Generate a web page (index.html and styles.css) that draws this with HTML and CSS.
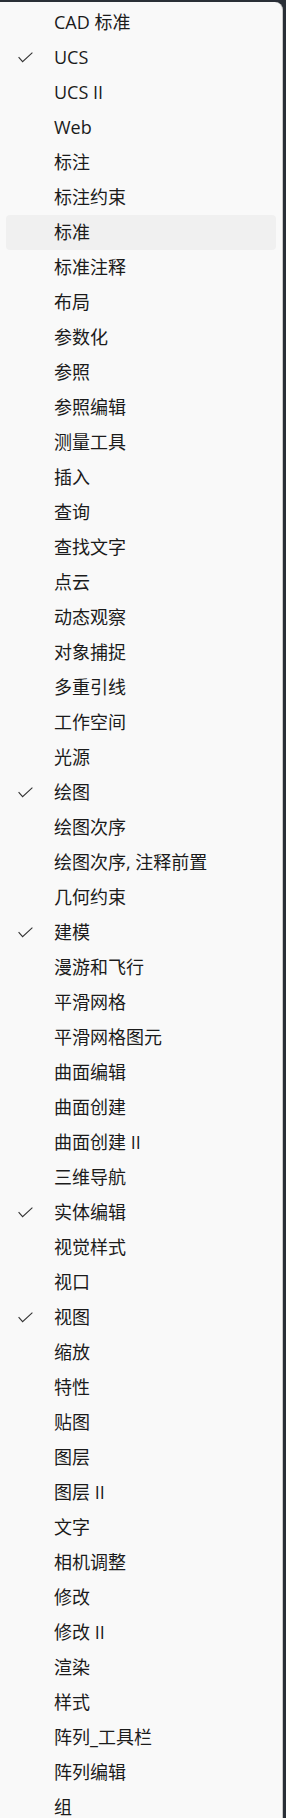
FILE: index.html
```html
<!DOCTYPE html>
<html lang="zh-CN">
<head>
<meta charset="utf-8">
<link rel="stylesheet" href="styles.css">
</head>
<body>
<div class="menu">
  <ul class="list">
    <li class="item">CAD 标准</li>
    <li class="item checked">UCS</li>
    <li class="item">UCS II</li>
    <li class="item">Web</li>
    <li class="item">标注</li>
    <li class="item">标注约束</li>
    <li class="item hover">标准</li>
    <li class="item">标准注释</li>
    <li class="item">布局</li>
    <li class="item">参数化</li>
    <li class="item">参照</li>
    <li class="item">参照编辑</li>
    <li class="item">测量工具</li>
    <li class="item">插入</li>
    <li class="item">查询</li>
    <li class="item">查找文字</li>
    <li class="item">点云</li>
    <li class="item">动态观察</li>
    <li class="item">对象捕捉</li>
    <li class="item">多重引线</li>
    <li class="item">工作空间</li>
    <li class="item">光源</li>
    <li class="item checked">绘图</li>
    <li class="item">绘图次序</li>
    <li class="item">绘图次序, 注释前置</li>
    <li class="item">几何约束</li>
    <li class="item checked">建模</li>
    <li class="item">漫游和飞行</li>
    <li class="item">平滑网格</li>
    <li class="item">平滑网格图元</li>
    <li class="item">曲面编辑</li>
    <li class="item">曲面创建</li>
    <li class="item">曲面创建 II</li>
    <li class="item">三维导航</li>
    <li class="item checked">实体编辑</li>
    <li class="item">视觉样式</li>
    <li class="item">视口</li>
    <li class="item checked">视图</li>
    <li class="item">缩放</li>
    <li class="item">特性</li>
    <li class="item">贴图</li>
    <li class="item">图层</li>
    <li class="item">图层 II</li>
    <li class="item">文字</li>
    <li class="item">相机调整</li>
    <li class="item">修改</li>
    <li class="item">修改 II</li>
    <li class="item">渲染</li>
    <li class="item">样式</li>
    <li class="item">阵列_工具栏</li>
    <li class="item">阵列编辑</li>
    <li class="item">组</li>
  </ul>
</div>
</body>
</html>
```
FILE: styles.css
```css
html, body {
  margin: 0;
  padding: 0;
}
body {
  background: #2a2f37;
  width: 286px;
  height: 1818px;
  overflow: hidden;
  font-family: "Open Sans", "Noto Sans CJK SC", sans-serif;
}
.menu {
  margin-top: 2px;
  width: 283px;
  background: #f9f9f9;
  border-right: 1px solid #c9c9c9;
  border-top-right-radius: 8px;
  box-sizing: border-box;
  padding: 3px 6px 0 6px;
}
.list {
  list-style: none;
  margin: 0;
  padding: 0;
}
.item {
  position: relative;
  height: 35px;
  line-height: 35px;
  padding-left: 48px;
  font-size: 18px;
  color: #1b1b1b;
  border-radius: 4px;
  white-space: nowrap;
}
.item.hover {
  background: #f0f0f0;
}
.item.checked::before {
  content: "";
  position: absolute;
  left: 12px;
  top: 12px;
  width: 15px;
  height: 11px;
  background: no-repeat center / 15px 11px url("data:image/svg+xml,%3Csvg xmlns='http://www.w3.org/2000/svg' viewBox='0 0 15 11'%3E%3Cpath d='M0.6 5.2 L4.6 9.6 L14.4 0.6' fill='none' stroke='%23333' stroke-width='1.1'/%3E%3C/svg%3E");
}
```
